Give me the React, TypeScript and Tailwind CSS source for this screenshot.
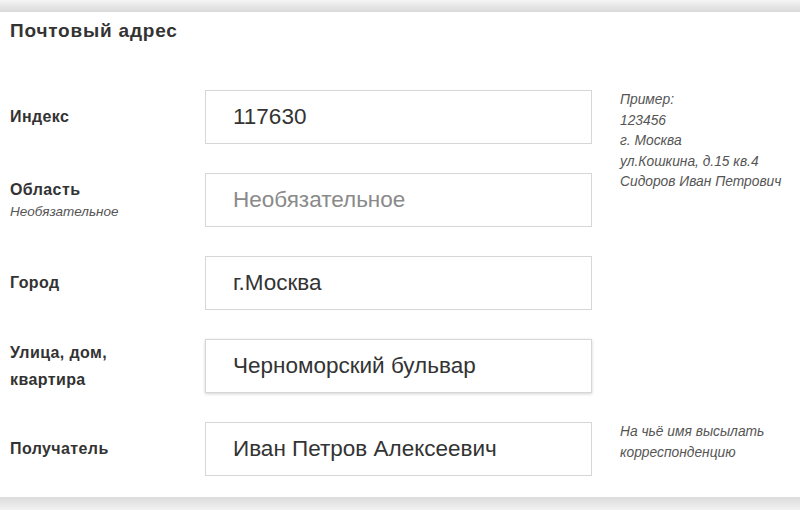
// App.tsx
// Postal address form block

type Row = {
  label: string[];
  sub?: string;
  value?: string;
  placeholder?: string;
  hint?: string[];
  focused?: boolean;
};

const ROWS: Row[] = [
  {
    label: ["Индекс"],
    value: "117630",
    hint: ["Пример:", "123456", "г. Москва", "ул.Кошкина, д.15 кв.4", "Сидоров Иван Петрович"],
  },
  { label: ["Область"], sub: "Необязательное", placeholder: "Необязательное" },
  { label: ["Город"], value: "г.Москва" },
  { label: ["Улица, дом,", "квартира"], value: "Черноморский бульвар", focused: true },
  { label: ["Получатель"], value: "Иван Петров Алексеевич", hint: ["На чьё имя высылать", "корреспонденцию"] },
];

export default function App() {
  return (
    <div className="w-[800px] h-[510px] flex flex-col bg-white font-['Liberation_Sans',Arial,sans-serif] text-[#333]">
      <div className="h-[12px] shrink-0 bg-gradient-to-b from-[#f5f5f5] to-[#d9d9d9]" />

      <div className="flex-1 bg-white pl-[10px] pt-[9px]">
        <h2 className="text-[19px] leading-[20px] font-bold tracking-[0.8px] text-[#333]">Почтовый адрес</h2>

        <div className="mt-[49px] flex flex-col gap-[29px]">
          {ROWS.map((row, i) => (
            <div key={i} className="flex items-start h-[54px]">
              <div className="w-[195px] h-[54px] shrink-0 flex flex-col justify-center">
                {row.label.length > 1 ? (
                  <div className="text-[16px] leading-[27px] font-bold tracking-[0.4px]">
                    {row.label.map((l) => (
                      <div key={l}>{l}</div>
                    ))}
                  </div>
                ) : (
                  <div className="text-[16px] leading-[20px] font-bold tracking-[0.4px]">{row.label[0]}</div>
                )}
                {row.sub && (
                  <div className="text-[13.5px] leading-[16px] italic text-[#555] mt-[4px]">{row.sub}</div>
                )}
              </div>

              <div
                className={
                  "w-[387px] h-[54px] shrink-0 border border-[#d6d6d6] bg-white flex items-center pl-[27px] text-[22.5px] " +
                  (row.focused ? "shadow-[0_1px_3px_rgba(0,0,0,0.18)]" : "")
                }
              >
                {row.value ? (
                  <span className="text-[#333]">{row.value}</span>
                ) : (
                  <span className="text-[#8a8a8a]">{row.placeholder}</span>
                )}
              </div>

              {row.hint && (
                <div className="ml-[28px] text-[13.8px] leading-[20.5px] italic text-[#555]">
                  {row.hint.map((h) => (
                    <div key={h}>{h}</div>
                  ))}
                </div>
              )}
            </div>
          ))}
        </div>
      </div>

      <div className="h-[13px] shrink-0 bg-gradient-to-b from-[#dcdcdc] to-[#f2f2f2]" />
    </div>
  );
}
